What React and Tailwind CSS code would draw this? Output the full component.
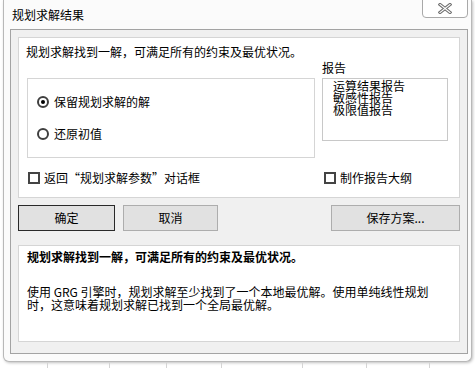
export default function App() {
  const Radio = ({ checked }) => (
    <span className="w-[12px] h-[12px] rounded-full border-2 border-[#3f3f3f] bg-white flex items-center justify-center shrink-0">
      {checked && <span className="w-[4px] h-[4px] rounded-full bg-black" />}
    </span>
  );
  const Check = () => (
    <span className="w-[12px] h-[12px] border-2 border-[#444] bg-white shrink-0" />
  );
  const cols = [48, 62, 57, 55, 81, 64, 63];
  return (
    <div className="w-[475px] h-[368px] bg-white overflow-hidden flex flex-col font-['Noto_Sans_CJK_SC',sans-serif] text-[12px] text-black">
      <div className="ml-[3px] w-[469px] h-[362px] shrink-0 flex flex-col bg-[#fbfbfb] border border-t-0 border-[#b8b8b8] rounded-b-[6px] shadow-[1px_1px_3px_rgba(0,0,0,0.25)]">
        {/* title bar */}
        <div className="h-[29px] shrink-0 flex items-start justify-between pl-[8px] pr-[3px]">
          <span className="mt-[8px] leading-[14px]">规划求解结果</span>
          <div className="w-[46px] h-[19px] -mt-[1px] border border-[#a9a9a9] rounded-b-[4px] bg-white flex items-center justify-center">
            <svg width="14" height="11" viewBox="0 0 14 11">
              <path d="M2 1.5 L12 9.5 M12 1.5 L2 9.5" stroke="#6d6d6d" strokeWidth="3.2" strokeLinecap="square" />
              <path d="M2 1.5 L12 9.5 M12 1.5 L2 9.5" stroke="#ffffff" strokeWidth="1.2" strokeLinecap="square" />
            </svg>
          </div>
        </div>
        {/* client frame */}
        <div className="ml-[6px] w-[458px] h-[325px] shrink-0 border border-[#a3a3a3] bg-[#f0f0f0] px-[7px] pt-[7px] flex flex-col">
          {/* top panel */}
          <div className="h-[161px] shrink-0 bg-white border border-[#d5d5d5] flex flex-col">
            <div className="mt-[7px] ml-[7px] leading-[14px]">规划求解找到一解，可满足所有的约束及最优状况。</div>
            <div className="mt-[2px] flex items-start">
              <div className="ml-[8px] mt-[17px] w-[288px] h-[80px] border border-[#d5d5d5] flex flex-col">
                <div className="mt-[16px] ml-[9px] flex items-center gap-[5px] leading-[14px]">
                  <Radio checked />
                  <span>保留规划求解的解</span>
                </div>
                <div className="mt-[18px] ml-[9px] flex items-center gap-[5px] leading-[14px]">
                  <Radio />
                  <span>还原初值</span>
                </div>
              </div>
              <div className="ml-[7px] w-[126px] flex flex-col">
                <span className="leading-[14px]">报告</span>
                <div className="mt-[3px] h-[63px] border border-[#c8c8c8] bg-white pl-[10px] pt-[1px] flex flex-col leading-[12px]">
                  <span>运算结果报告</span>
                  <span>敏感性报告</span>
                  <span>极限值报告</span>
                </div>
              </div>
            </div>
            <div className="mt-[13px] ml-[9px] flex items-center leading-[14px]">
              <div className="w-[296px] flex items-center gap-[4px]">
                <Check />
                <span>返回“规划求解参数”对话框</span>
              </div>
              <div className="flex items-center gap-[4px]">
                <Check />
                <span>制作报告大纲</span>
              </div>
            </div>
          </div>
          {/* buttons */}
          <div className="mt-[7px] h-[26px] shrink-0 flex">
            <button className="w-[97px] h-full bg-[#e1e1e1] border border-[#2a2a2a] leading-[14px]">确定</button>
            <button className="ml-[8px] w-[95px] h-full bg-[#e1e1e1] border border-[#adadad] leading-[14px]">取消</button>
            <button className="ml-auto w-[129px] h-full bg-[#e1e1e1] border border-[#adadad] leading-[14px]">保存方案...</button>
          </div>
          {/* message panel */}
          <div className="mt-[14px] h-[97px] shrink-0 bg-white border border-[#d5d5d5] pl-[8px] pt-[4px] flex flex-col">
            <div className="font-bold leading-[14px] whitespace-nowrap">规划求解找到一解，可满足所有的约束及最优状况。</div>
            <div className="mt-[22px] leading-[12.5px] whitespace-nowrap">
              使用 GRG 引擎时，规划求解至少找到了一个本地最优解。使用单纯线性规划
              <br />
              时，这意味着规划求解已找到一个全局最优解。
            </div>
          </div>
        </div>
      </div>
      <div className="flex h-[6px] shrink-0">
        {cols.map((w, i) => (
          <div key={i} style={{ width: w }} className="h-full border-r border-[#d4d4d4] shrink-0" />
        ))}
      </div>
    </div>
  );
}
